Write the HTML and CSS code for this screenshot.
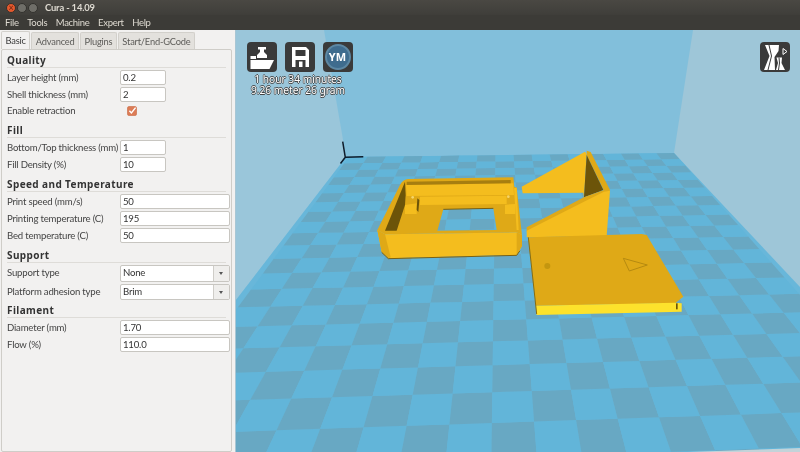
FILE: index.html
```html
<!DOCTYPE html>
<html lang="en">
<head>
<meta charset="utf-8">
<title>Cura - 14.09</title>
<link rel="stylesheet" href="styles.css">
</head>
<body>
<div class="app">
  <header class="titlebar">
    <div class="controls">
      <span class="ctl ctl-close">×</span>
      <span class="ctl"></span>
      <span class="ctl"></span>
    </div>
    <span class="title">Cura - 14.09</span>
  </header>
  <nav class="menubar">
    <span>File</span><span>Tools</span><span>Machine</span><span>Expert</span><span>Help</span>
  </nav>
  <main class="main">
    <aside class="sidebar">
      <div class="tabs">
        <span class="tab tab-active">Basic</span>
        <span class="tab">Advanced</span>
        <span class="tab">Plugins</span>
        <span class="tab">Start/End-GCode</span>
      </div>
      <div class="panel">
        <section class="section">
          <h2 class="heading">Quality</h2>
          <div class="row"><span class="label">Layer height (mm)</span><span class="field field-short">0.2</span></div>
          <div class="row"><span class="label">Shell thickness (mm)</span><span class="field field-short">2</span></div>
          <div class="row row-check"><span class="label">Enable retraction</span>
            <svg class="check" viewBox="0 0 10 10"><rect x="0.5" y="0.5" width="9" height="9" rx="1.5" class="check-box"/><path d="M2.4 4.8 L4.4 7 L8.6 1.6" class="check-mark"/></svg>
          </div>
        </section>
        <section class="section section-gap1">
          <h2 class="heading">Fill</h2>
          <div class="row"><span class="label">Bottom/Top thickness (mm)</span><span class="field field-short">1</span></div>
          <div class="row"><span class="label">Fill Density (%)</span><span class="field field-short">10</span></div>
        </section>
        <section class="section section-gap2">
          <h2 class="heading">Speed and Temperature</h2>
          <div class="row"><span class="label">Print speed (mm/s)</span><span class="field">50</span></div>
          <div class="row"><span class="label">Printing temperature (C)</span><span class="field">195</span></div>
          <div class="row"><span class="label">Bed temperature (C)</span><span class="field">50</span></div>
        </section>
        <section class="section section-gap2">
          <h2 class="heading">Support</h2>
          <div class="row row-combo"><span class="label">Support type</span><span class="combo"><span class="combo-value">None</span><span class="combo-btn"></span></span></div>
          <div class="row row-combo"><span class="label">Platform adhesion type</span><span class="combo"><span class="combo-value">Brim</span><span class="combo-btn"></span></span></div>
        </section>
        <section class="section">
          <h2 class="heading">Filament</h2>
          <div class="row"><span class="label">Diameter (mm)</span><span class="field">1.70</span></div>
          <div class="row"><span class="label">Flow (%)</span><span class="field">110.0</span></div>
        </section>
      </div>
    </aside>
    <div class="view">
      <svg class="scene" viewBox="236 30 564 422" preserveAspectRatio="none">
        <rect x="236" y="30" width="564" height="422" class="wall-back"/>
        <polygon points="236,30 324,30 346,157 236,300" class="wall-side-l"/>
        <polygon points="693,30 800,30 800,290 674,153" class="wall-side-r"/>
        <polygon points="346,157 674,153 800,287 800,452 236,452 236,300" class="floor-base"/>
        <g id="floor"></g>
        <polygon points="688,452 800,448 800,452" class="floor-front"/>
        <path d="M345.3 157.3 L342.7 141.7 M345.3 157.3 L363.3 156.7 M345.3 157.3 L340.5 163.5" class="axes"/>
        <g transform="translate(360 140) scale(0.33333)">
          <path class="y-top" fill-rule="evenodd" d="M52 270 L120 135 Q128 118 145 117 L460 112 L463 140 L470 143 L486 285 L470 277 L75 283 Z M250 208 L232 272 L410 270 L400 205 Z"/>
          <path class="y-face" d="M52 270 L75 283 L470 277 L486 285 L486 318 L470 345 L85 355 L65 335 Z"/>
          <path class="y-top" d="M52 270 L75 283 L92 352 L85 355 L65 335 Z"/>
          <path class="y-top" d="M470 277 L486 285 L486 318 L470 345 Z"/>
          <path class="edge" d="M65 337 L85 356 L470 346 L480 332"/>
          <path class="y-face" d="M138 135 L460 130 L462 165 L140 168 Z"/>
          <path class="y-slot" d="M140 125 L452 120 L452 130 L140 135 Z"/>
          <path class="y-dark" d="M135 125 L75 272 L110 272 L135 195 L137 165 Z"/>
          <path class="y-face" d="M180 170 L440 167 L440 192 L180 195 Z"/>
          <path class="y-face" d="M135 195 L170 190 L170 222 L135 222 Z"/>
          <path class="y-dark" d="M172 175 L178 180 L175 216 L170 210 Z"/>
          <path class="y-face" d="M435 194 L465 192 L466 222 L435 222 Z"/>
          <path class="y-face" d="M462 145 L470 143 L476 270 L470 270 Z"/>
          <circle cx="158" cy="172" r="4" class="y-dot"/>
          <circle cx="445" cy="170" r="4" class="y-dot"/>
          <path class="hole-edge" d="M250 208 L400 205"/>

          <path class="y-top" d="M680 32 L692 36 L750 150 L732 152 L680 45 Z"/>
          <path class="y-face" d="M485 140 L675 35 L680 42 L672 172 L670 158 L488 160 Z"/>
          <path class="y-dark" d="M680 45 L730 150 L672 172 Z"/>
          <path class="y-top" d="M500 262 L672 172 L732 150 L750 150 L745 170 L500 275 Z"/>
          <path class="y-face" d="M500 272 L672 185 L732 155 L750 152 L740 288 L500 292 Z"/>

          <path class="y-top" d="M505 292 L845 282 L860 285 L970 470 L945 490 L528 497 Z"/>
          <path class="y-bright" d="M528 497 L945 488 L965 490 L965 515 L530 525 Z"/>
          <path class="edge-thin" d="M505 292 L530 522"/>
          <path class="y-dark" d="M948 490 L953 490 L953 508 L948 508 Z"/>
          <circle cx="562" cy="378" r="9" class="y-bump"/>
          <path class="y-mark" d="M790 355 L862 375 L808 393 Z"/>
        </g>
      </svg>

      <div class="hud">
        <div class="hud-buttons">
          <button class="hud-btn" type="button">
            <svg viewBox="0 0 30 30" class="hud-svg">
              <path class="w" d="M11 5 H19 V7.5 H17 V10 L20 13 V16 H10 V13 L13 10 V7.5 H11 Z"/>
              <path class="w" d="M3.5 14 H9 V17 H3.5 Z"/>
              <path class="w" d="M3.5 18 H27 L22.5 27 H3.5 Z"/>
            </svg>
          </button>
          <button class="hud-btn" type="button">
            <svg viewBox="0 0 30 30" class="hud-svg">
              <path class="w" fill-rule="evenodd" d="M7 5 H21 L24 8 V25 H7 Z M10.5 8 V14 H20.5 V8 Z M10.5 18 V25 H20.5 V18 Z"/>
              <path class="w" d="M14 19.5 H17.5 V25 H14 Z"/>
            </svg>
          </button>
          <button class="hud-btn" type="button">
            <span class="ym">YM</span>
          </button>
        </div>
        <p class="hud-text">1 hour 34 minutes<br>9.26 meter 26 gram</p>
      </div>

      <button class="hud-btn mirror" type="button">
        <svg viewBox="0 0 30 30" class="hud-svg">
          <path class="w" d="M5 3 H19 L18.5 9 L14.5 15 L15 28 H4 L9.5 14 Z"/>
          <path class="gap" d="M9 3 L11.5 14 L8 28"/>
          <path class="w" d="M16.5 15.5 H22 L21.5 21 L25 28 H16 L18 21 Z"/>
          <path class="gap" d="M19 15.5 L19.5 21 L18.5 28"/>
          <path class="tri" d="M23 6.5 L27 9.5 L23 12.5 Z"/>
        </svg>
      </button>
    </div>
  </main>
</div>
<script src="floor.js"></script>
</body>
</html>
```
FILE: styles.css
```css
* { box-sizing: border-box; }
html, body { margin: 0; padding: 0; }
body { width: 800px; height: 452px; overflow: hidden; font-family: Lato, "Noto Sans", sans-serif; }
.app { width: 800px; height: 452px; display: flex; flex-direction: column; overflow: hidden; filter: blur(0.35px); }

.titlebar { height: 15px; background: linear-gradient(#4a4843, #3f3e3a); display: flex; align-items: center; color: #dfdbd2; }
.controls { display: flex; gap: 1px; padding-left: 6px; width: 45px; }
.ctl { width: 10px; height: 10px; border-radius: 50%; background: #6f6e68; border: 1px solid #33322e; }
.ctl-close { background: #e5592d; color: #6b2410; font-size: 9px; line-height: 8px; text-align: center; }
.title { font-size: 9.4px; font-weight: 700; letter-spacing: -0.15px; line-height: 15px; }

.menubar { height: 15px; background: #3c3b37; color: #dfdbd2; display: flex; gap: 8.5px; padding-left: 5px; font-size: 9.5px; letter-spacing: -0.3px; line-height: 15px; }

.main { flex: 1; display: flex; min-height: 0; }
.sidebar { width: 236px; background: #f2f1f0; padding: 1px 3px 0 1px; display: flex; flex-direction: column; color: #3c3c3c; border-right: 1px solid #a8c6d4; }
.tabs { display: flex; height: 18px; gap: 1px; font-size: 9.3px; letter-spacing: -0.2px; }
.tab { padding: 0 3.5px; line-height: 17px; background: #e3e1dd; color: #5c5b58; border: 1px solid #d2d0cb; border-bottom: 0; border-radius: 2px 2px 0 0; margin-top: 1px; }
.tab-active { background: #f2f1f0; color: #3c3c3c; margin-top: 0; position: relative; z-index: 1; height: 18px; margin-bottom: -1px; }
.panel { flex: 1; border: 1px solid #cfcdc8; border-radius: 2px; padding: 2px 1.5px 0 5px; }

.section-gap1 { margin-top: 1px; }
.section-gap2 { margin-top: 2px; }
.heading { margin: 0; height: 18px; font-family: "Noto Sans", sans-serif; font-size: 10px; font-weight: 700; line-height: 16px; letter-spacing: 0.4px; color: #333; }
.heading::after { content: ""; display: block; height: 1px; background: #dedcd8; margin: -1px 4px 0 0; }

.row { display: flex; height: 17px; font-size: 9.6px; letter-spacing: -0.2px; }
.row-combo { height: 18.5px; }
.label { width: 112.5px; line-height: 15px; white-space: nowrap; flex: none; color: #444; }
.field { flex: 1; height: 15px; line-height: 13px; padding-left: 2.5px; background: #fff; border: 1px solid #c8c6c1; border-radius: 2px; color: #333; }
.field-short { flex: none; width: 46px; }
.row-check { align-items: flex-start; }
.row-check .label { line-height: 13px; }
.check { width: 10px; height: 10px; margin: 1.5px 0 0 7.5px; flex: none; }
.check-box { fill: #dc7c56; stroke: #c9683f; stroke-width: 0.6; }
.check-mark { fill: none; stroke: #fff; stroke-width: 1.4; }

.combo { flex: 1; height: 16.5px; display: flex; background: #fff; border: 1px solid #c8c6c1; border-radius: 2px; line-height: 14px; }
.combo-value { flex: 1; padding-left: 2.5px; color: #333; }
.combo-btn { width: 16px; background: #efeeec; border-left: 1px solid #cfcdc8; position: relative; }
.combo-btn::after { content: ""; position: absolute; left: 5.5px; top: 6px; border: 2.5px solid transparent; border-top: 3px solid #555; border-bottom: 0; }

.view { flex: 1; position: relative; min-width: 0; }
.scene { display: block; width: 100%; height: 100%; }
.wall-back { fill: #82bfdb; }
.wall-side-l { fill: #9ac6da; }
.wall-side-r { fill: #9ec6d8; }
.floor-base { fill: #68b7da; }
.floor-front { fill: #c3d3d9; }
.cell-l { fill: #62b5d9; }
.cell-d { fill: #68a8c3; }
.axes { fill: none; stroke: #0d1c2b; stroke-width: 1.5; }
.y-top { fill: #dfa917; }
.y-face { fill: #f4bd1e; }
.y-bright { fill: #fde22c; }
.y-dark { fill: #6c5409; }
.y-slot { fill: #a67e10; }
.y-dot { fill: #f6d56a; }
.y-bump { fill: #c4960f; }
.y-mark { fill: none; stroke: #b58a10; stroke-width: 3; }
.edge { fill: none; stroke: #7b6010; stroke-width: 3; }
.edge-thin { fill: none; stroke: #8a6c0e; stroke-width: 3; }
.hole-edge { fill: none; stroke: #7a5e0c; stroke-width: 3; }

.hud { position: absolute; left: 10.5px; top: 11.5px; display: flex; flex-direction: column; width: 103px; }
.hud-buttons { display: flex; gap: 8px; }
.hud-btn { width: 30px; height: 30px; padding: 0; border: 0; border-radius: 4px; background: #3a3a3a; display: flex; align-items: center; justify-content: center; flex: none; }
.hud-svg { width: 30px; height: 30px; display: block; }
.w { fill: #fff; }
.gap { fill: none; stroke: #3a3a3a; stroke-width: 1; }
.tri { fill: none; stroke: #fff; stroke-width: 1; }
.ym { width: 26px; height: 26px; border-radius: 50%; background: #3f6c8e; border: 2px solid #5c87a3; color: #fff; font-size: 11px; font-weight: 700; line-height: 22px; text-align: center; font-family: "Noto Sans", sans-serif; }
.hud-text { margin: 2px 0 0; width: 103px; text-align: center; font-family: "Noto Sans", sans-serif; font-size: 10.2px; line-height: 11px; color: #fff; white-space: nowrap; text-shadow: 0.7px 0 0 #444, -0.7px 0 0 #444, 0 0.7px 0 #444, 0 -0.7px 0 #444; }
.mirror { position: absolute; right: 10.5px; top: 11.5px; }
```
FILE: floor.js
```js
// Projects the 18-column checker platform onto the screen with a homography.
(function () {
  var pairs = [
    [3, 2, 304.3, 370.7],
    [16, 2, 782.7, 356.7],
    [0, 19, 349, 157],
    [18, 19, 674, 153]
  ];
  var A = [];
  pairs.forEach(function (p) {
    var u = p[0], v = p[1], x = p[2], y = p[3];
    A.push([u, v, 1, 0, 0, 0, -u * x, -v * x, x]);
    A.push([0, 0, 0, u, v, 1, -u * y, -v * y, y]);
  });
  for (var i = 0; i < 8; i++) {
    var m = i;
    for (var r = i + 1; r < 8; r++) if (Math.abs(A[r][i]) > Math.abs(A[m][i])) m = r;
    var t = A[i]; A[i] = A[m]; A[m] = t;
    for (var k = 0; k < 8; k++) {
      if (k === i) continue;
      var f = A[k][i] / A[i][i];
      for (var c = i; c < 9; c++) A[k][c] -= f * A[i][c];
    }
  }
  var h = A.map(function (row, n) { return row[8] / row[n]; });
  function project(u, v) {
    var w = h[6] * u + h[7] * v + 1;
    return ((h[0] * u + h[1] * v + h[2]) / w).toFixed(1) + "," + ((h[3] * u + h[4] * v + h[5]) / w).toFixed(1);
  }
  var g = document.getElementById("floor");
  var ns = "http://www.w3.org/2000/svg";
  for (var u = 0; u < 18; u++) {
    for (var v = -2; v < 19; v++) {
      var cell = document.createElementNS(ns, "polygon");
      cell.setAttribute("points", [project(u, v), project(u + 1, v), project(u + 1, v + 1), project(u, v + 1)].join(" "));
      cell.setAttribute("class", (u + v + 200) % 2 ? "cell-d" : "cell-l");
      g.appendChild(cell);
    }
  }
})();
```
